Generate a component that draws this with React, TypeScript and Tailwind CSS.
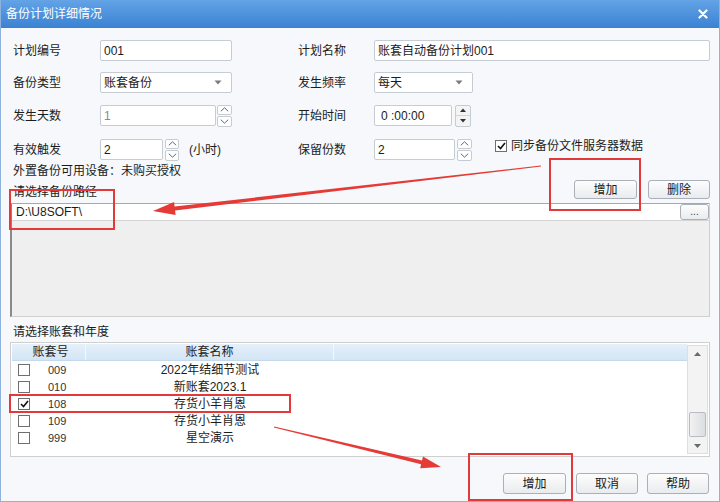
import React from "react";

const FONT = "font-['Liberation_Sans','Noto_Sans_CJK_SC',sans-serif]";

function Box({ w, children, cls = "" }: { w: string; children?: React.ReactNode; cls?: string }) {
  return (
    <div className={`${w} h-[21px] bg-white border border-[#c5ccd4] rounded-[2px] flex items-center px-[3px] text-[12px] leading-[14px] text-[#1c1c1c] ${cls}`}>
      {children}
    </div>
  );
}

function Caret() {
  return (
    <svg width="8" height="5" viewBox="0 0 8 5" className="ml-auto mr-[6px]">
      <path d="M0.5 0.5 L7.5 0.5 L4 4.5 Z" fill="#7b7b7b" />
    </svg>
  );
}

function ChevSpin({ w }: { w: string }) {
  return (
    <div className={`${w} h-[22px] flex flex-col gap-[1px]`}>
      {[0, 1].map((i) => (
        <div key={i} className="flex-1 bg-white border border-[#c5ccd4] rounded-[2px] flex items-center justify-center">
          <svg width="9" height="5" viewBox="0 0 9 5">
            <path d={i === 0 ? "M0.8 4.3 L4.5 0.8 L8.2 4.3" : "M0.8 0.7 L4.5 4.2 L8.2 0.7"} stroke="#606870" strokeWidth="1" fill="none" />
          </svg>
        </div>
      ))}
    </div>
  );
}

function TriSpin({ w }: { w: string }) {
  return (
    <div className={`${w} h-[22px] flex flex-col bg-[#f4f4f4] border border-[#c5ccd4] rounded-[2px]`}>
      <div className="flex-1 flex items-center justify-center border-b border-[#d5d5d5]">
        <svg width="6" height="4" viewBox="0 0 6 4"><path d="M0 4 L3 0.5 L6 4 Z" fill="#333" /></svg>
      </div>
      <div className="flex-1 flex items-center justify-center">
        <svg width="6" height="4" viewBox="0 0 6 4"><path d="M0 0 L3 3.5 L6 0 Z" fill="#333" /></svg>
      </div>
    </div>
  );
}

function Btn({ w, h, children }: { w: string; h: string; children: React.ReactNode }) {
  return (
    <div className={`${w} ${h} rounded-[3px] border border-[#a9b0b8] bg-gradient-to-b from-[#fdfdfd] to-[#e9ebee] flex items-center justify-center text-[12px] leading-[14px] text-[#1a1a1a]`}>
      {children}
    </div>
  );
}

function Check({ checked }: { checked?: boolean }) {
  return (
    <div className="w-[12px] h-[12px] border border-[#6f6f6f] bg-white flex items-center justify-center">
      {checked && (
        <svg width="9" height="8" viewBox="0 0 9 8">
          <path d="M1 4 L3.5 6.5 L8 1" stroke="#111" strokeWidth="1.6" fill="none" />
        </svg>
      )}
    </div>
  );
}

const rows = [
  { no: "009", name: "2022年结细节测试" },
  { no: "010", name: "新账套2023.1" },
  { no: "108", name: "存货小羊肖恩", checked: true },
  { no: "109", name: "存货小羊肖恩" },
  { no: "999", name: "星空演示" },
];

export default function App() {
  return (
    <div className={`${FONT} relative w-[720px] h-[502px] overflow-hidden flex flex-col bg-[#f6f8fb] border-x border-b border-[#8db2de] text-[#1c1c1c]`}>
      {/* title bar */}
      <div className="h-[28px] shrink-0 flex items-center justify-between pl-[5px] pr-[11px] bg-gradient-to-b from-[#63a3e6] to-[#3b82d3] text-white text-[12px] leading-[14px]">
        <span>备份计划详细情况</span>
        <svg width="10" height="10" viewBox="0 0 10 10">
          <path d="M1.5 1.5 L8.5 8.5 M8.5 1.5 L1.5 8.5" stroke="#fff" strokeWidth="2.2" strokeLinecap="round" />
        </svg>
      </div>

      <div className="flex flex-col pl-[12px] pr-[9px] text-[12px] leading-[14px]">
        {/* row 1 */}
        <div className="mt-[12px] h-[21px] flex items-center">
          <div className="w-[87px]">计划编号</div>
          <div className="w-[198px] flex"><Box w="w-[132px]">001</Box></div>
          <div className="w-[76px]">计划名称</div>
          <Box w="flex-1">账套自动备份计划001</Box>
        </div>
        {/* row 2 */}
        <div className="mt-[11px] h-[21px] flex items-center">
          <div className="w-[87px]">备份类型</div>
          <div className="w-[198px] flex"><Box w="w-[132px]">账套备份<Caret /></Box></div>
          <div className="w-[76px]">发生频率</div>
          <Box w="w-[99px]">每天<Caret /></Box>
        </div>
        {/* row 3 */}
        <div className="mt-[12px] h-[21px] flex items-center">
          <div className="w-[87px]">发生天数</div>
          <div className="w-[198px] flex items-center">
            <Box w="w-[116px]"><span className="text-[#8a8a8a]">1</span></Box>
            <div className="ml-[1px]"><ChevSpin w="w-[15px]" /></div>
          </div>
          <div className="w-[76px]">开始时间</div>
          <Box w="w-[78px]" cls="pl-[6px]">0 :00:00</Box>
          <div className="ml-[3px]"><TriSpin w="w-[16px]" /></div>
        </div>
        {/* row 4 */}
        <div className="mt-[13px] h-[21px] flex items-center">
          <div className="w-[87px]">有效触发</div>
          <div className="w-[198px] flex items-center">
            <Box w="w-[63px]">2</Box>
            <div className="ml-[2px]"><ChevSpin w="w-[14px]" /></div>
            <span className="ml-[10px]">(小时)</span>
          </div>
          <div className="w-[76px]">保留份数</div>
          <Box w="w-[81px]">2</Box>
          <div className="ml-[2px]"><ChevSpin w="w-[15px]" /></div>
          <div className="self-start flex items-center ml-[23px] gap-[4px] h-[14px]">
            <Check checked />
            <span>同步备份文件服务器数据</span>
          </div>
        </div>
        {/* row 5 */}
        <div className="mt-[4px]">外置备份可用设备：未购买授权</div>
        <div className="mt-[2px] flex items-end justify-between">
          <div>请选择备份路径</div>
          <div className="flex gap-[11px]">
            <Btn w="w-[63px]" h="h-[19px]">增加</Btn>
            <Btn w="w-[62px]" h="h-[19px]">删除</Btn>
          </div>
        </div>
      </div>

      {/* path area */}
      <div className="mt-[4px] mx-[9px] h-[114px] flex flex-col bg-[#efefef] border border-[#cfcfcf] border-t-[#a8a8a8] border-l-2 border-l-[#8a8a8a]">
        <div className="h-[17px] flex items-center bg-white border-b border-[#d4d4d4]">
          <div className="flex-1 pl-[4px] text-[12px] leading-[14px]">D:\U8SOFT\</div>
          <div className="w-[29px] h-[16px] mr-[0px] rounded-[3px] border border-[#a9b0b8] bg-gradient-to-b from-[#fdfdfd] to-[#e9ebee] flex items-center justify-center text-[10px] leading-[10px] text-[#444]">...</div>
        </div>
      </div>

      <div className="mt-[8px] pl-[12px] text-[12px] leading-[14px]">请选择账套和年度</div>

      {/* table */}
      <div className="mt-[3px] mx-[9px] h-[115px] flex bg-white border border-[#cfcfcf]">
        <div className="flex-1 flex flex-col pl-[1px] pt-[1px]">
          <div className="h-[17px] flex items-stretch bg-gradient-to-b from-[#e6f0fa] to-[#d3e5f4] border-b border-[#c5d9ec] text-[12px] leading-[14px] text-[#222]">
            <div className="w-[74px] flex items-center justify-center pl-[4px] border-r border-[#f4f8fc]">账套号</div>
            <div className="w-[248px] flex items-center justify-center border-r border-[#f4f8fc]">账套名称</div>
            <div className="flex-1" />
          </div>
          {rows.map((r) => (
            <div key={r.no} className="h-[17px] flex items-center text-[12px] leading-[14px]">
              <div className="w-[74px] flex items-center pl-[6px]">
                <Check checked={r.checked} />
                <span className="ml-[18px] text-[11px] text-[#333]">{r.no}</span>
              </div>
              <div className="w-[248px] text-center">{r.name}</div>
            </div>
          ))}
        </div>
        {/* scrollbar */}
        <div className="w-[21px] mr-[1px] my-[2px] flex flex-col items-center bg-[#f3f3f3] border border-[#dedede]">
          <div className="h-[16px] flex items-center justify-center">
            <svg width="7" height="4" viewBox="0 0 7 4"><path d="M0 4 L3.5 0 L7 4 Z" fill="#6a6a6a" /></svg>
          </div>
          <div className="mt-[50px] w-[17px] h-[25px] rounded-[2px] border border-[#b8bcc2] bg-gradient-to-r from-[#f2f2f2] to-[#dcdde0]" />
          <div className="flex-1" />
          <div className="h-[14px] flex items-center justify-center">
            <svg width="7" height="4" viewBox="0 0 7 4"><path d="M0 0 L3.5 4 L7 0 Z" fill="#6a6a6a" /></svg>
          </div>
        </div>
      </div>

      {/* bottom buttons */}
      <div className="mt-[16px] pr-[10px] flex justify-end">
        <Btn w="w-[63px]" h="h-[21px]">增加</Btn>
        <div className="ml-[10px]"><Btn w="w-[62px]" h="h-[21px]">取消</Btn></div>
        <div className="ml-[9px]"><Btn w="w-[62px]" h="h-[21px]">帮助</Btn></div>
      </div>

      {/* red annotations overlay */}
      <div className="absolute left-[8px] top-[189px] w-[106px] h-[41px] border-2 border-[#e23a3a]" />
      <div className="absolute left-[548px] top-[158px] w-[92px] h-[53px] border-2 border-[#e23a3a]" />
      <div className="absolute left-[8px] top-[394px] w-[282px] h-[19px] border-2 border-[#e23a3a]" />
      <div className="absolute left-[467px] top-[453px] w-[105px] h-[48px] border-2 border-[#e23a3a]" />
      <svg className="absolute left-0 top-0 pointer-events-none" width="720" height="502" viewBox="0 0 720 502">
        <polygon points="152,211 174.6,214.9 174.1,210.5 540.1,166.5 539.9,165.5 173.6,206.5 173.1,202" fill="#e53a36" />
        <polygon points="440,467 419.2,468.2 420.1,464.3 272.9,427.5 273.1,426.5 421,460.4 422,456.5" fill="#e53a36" />
      </svg>
    </div>
  );
}
